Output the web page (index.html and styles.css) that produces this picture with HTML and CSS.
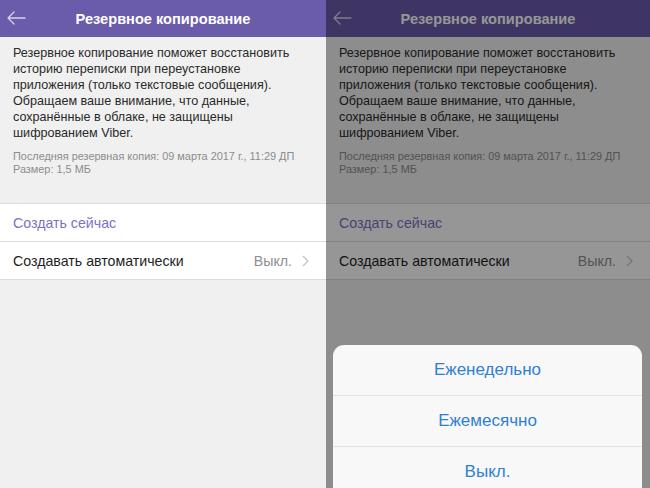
FILE: index.html
```html
<!DOCTYPE html>
<html lang="ru">
<head>
<meta charset="utf-8">
<title>Резервное копирование</title>
<link rel="stylesheet" href="styles.css">
</head>
<body>
<div class="screen">
  <section class="panel">
    <header class="bar">
      <svg class="back" width="20" height="14" viewBox="0 0 20 14"><path d="M19 7H2M8 1L2 7l6 6" fill="none" stroke="#d9d3f0" stroke-width="1.3" stroke-linecap="round" stroke-linejoin="round"/></svg>
      <h1 class="title">Резервное копирование</h1>
    </header>
    <div class="info">
      <p class="desc">Резервное копирование поможет восстановить историю переписки при переустановке приложения (только текстовые сообщения). Обращаем ваше внимание, что данные, сохранённые в облаке, не защищены шифрованием Viber.</p>
      <p class="meta">Последняя резервная копия: 09 марта 2017 г., 11:29 ДП<br>Размер: 1,5 МБ</p>
    </div>
    <ul class="list">
      <li class="row action">Создать сейчас</li>
      <li class="row">Создавать автоматически<span class="value">Выкл.<svg class="chev" width="7" height="12" viewBox="0 0 7 12"><path d="M1 1l5 5-5 5" fill="none" stroke="#c4c4c8" stroke-width="1.3"/></svg></span></li>
    </ul>
  </section>
  <section class="panel">
    <header class="bar">
      <svg class="back" width="20" height="14" viewBox="0 0 20 14"><path d="M19 7H2M8 1L2 7l6 6" fill="none" stroke="#d9d3f0" stroke-width="1.3" stroke-linecap="round" stroke-linejoin="round"/></svg>
      <h1 class="title">Резервное копирование</h1>
    </header>
    <div class="info">
      <p class="desc">Резервное копирование поможет восстановить историю переписки при переустановке приложения (только текстовые сообщения). Обращаем ваше внимание, что данные, сохранённые в облаке, не защищены шифрованием Viber.</p>
      <p class="meta">Последняя резервная копия: 09 марта 2017 г., 11:29 ДП<br>Размер: 1,5 МБ</p>
    </div>
    <ul class="list">
      <li class="row action">Создать сейчас</li>
      <li class="row">Создавать автоматически<span class="value">Выкл.<svg class="chev" width="7" height="12" viewBox="0 0 7 12"><path d="M1 1l5 5-5 5" fill="none" stroke="#c4c4c8" stroke-width="1.3"/></svg></span></li>
    </ul>
    <div class="overlay"></div>
    <div class="sheet">
      <div class="option">Еженедельно</div>
      <div class="option">Ежемесячно</div>
      <div class="option">Выкл.</div>
    </div>
  </section>
</div>
</body>
</html>
```
FILE: styles.css
```css
html, body {
  margin: 0;
  padding: 0;
}
body {
  width: 650px;
  height: 488px;
  overflow: hidden;
  font-family: "Liberation Sans", Arial, sans-serif;
  background: #f0f0f0;
}
.screen {
  display: grid;
  grid-template-columns: 326px 324px;
  height: 488px;
}
.panel {
  position: relative;
  background: #f0f0f0;
  overflow: hidden;
}
.bar {
  height: 37px;
  background: #6a5bab;
  display: flex;
  align-items: center;
  justify-content: center;
  position: relative;
}
.back {
  position: absolute;
  left: 6px;
  top: 11px;
}
.title {
  margin: 0;
  color: #fff;
  font-size: 14.6px;
  font-weight: bold;
}
.info {
  padding: 8px 13px 0;
  height: 158px;
}
.desc {
  margin: 0;
  font-size: 12.6px;
  line-height: 16px;
  color: #2a2a2a;
}
.meta {
  margin: 9px 0 0;
  font-size: 10.9px;
  line-height: 13px;
  color: #8c8c8c;
}
.list {
  list-style: none;
  margin: 0;
  padding: 0;
  background: #fff;
  border-top: 1px solid #dcdcdc;
}
.row {
  height: 37px;
  display: flex;
  align-items: center;
  justify-content: space-between;
  padding: 0 17px 0 13px;
  font-size: 14.2px;
  color: #1e1e1e;
  border-bottom: 1px solid #dcdcdc;
}
.action {
  color: #7d70c4;
}
.value {
  display: flex;
  align-items: center;
  gap: 10px;
  color: #8e8e93;
}
.overlay {
  position: absolute;
  inset: 0;
  background: rgba(0, 0, 0, 0.41);
}
.sheet {
  position: absolute;
  left: 7px;
  width: 309px;
  top: 345px;
  height: 160px;
  background: #f8f8f8;
  border-radius: 11px;
  display: flex;
  flex-direction: column;
}
.option {
  height: 50px;
  display: flex;
  align-items: center;
  justify-content: center;
  font-size: 17px;
  color: #2f80d5;
  border-bottom: 1px solid #e2e2e4;
}
.option:last-child {
  border-bottom: none;
}
```
